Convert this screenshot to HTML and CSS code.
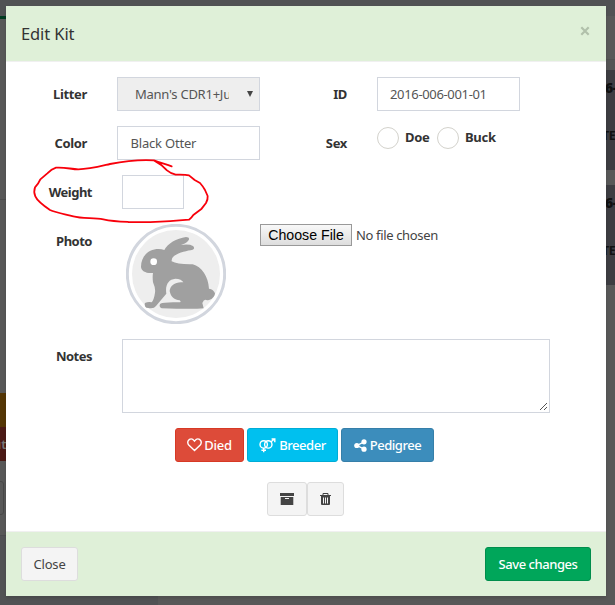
FILE: index.html
```html
<!DOCTYPE html>
<html lang="en">
<head>
<meta charset="utf-8">
<title>Edit Kit</title>
<link rel="stylesheet" href="styles.css">
</head>
<body>
<div class="backdrop" aria-hidden="true">
  <div class="b topbar"></div><div class="b accent"></div><div class="b panel-right"></div>
  <div class="b kit kit-1"><b>6-</b><i>TE</i></div>
  <div class="b kit kit-2"><b>6-</b><i>TE</i></div>
  <div class="b left-line"></div><div class="b orange"></div><div class="b red">ut</div>
  <div class="b ghost-button"></div><div class="b page-bottom"></div>
</div>
<main class="modal">
  <header class="modal-header"><h1>Edit Kit</h1><button class="dismiss" aria-label="Dismiss"><svg width="10" height="10" viewBox="0 0 10 10"><path d="M1.3 1.3 8.7 8.7M8.7 1.3 1.3 8.7"/></svg></button></header>
  <form class="modal-body">
    <div class="row">
      <label class="label">Litter</label><div class="control select"><span class="clip"><span class="litter">Mann's CDR1+Ju</span></span><span class="arrow"></span></div>
      <label class="label second">ID</label><div class="control id">2016-006-001-01</div>
    </div>
    <div class="row">
      <label class="label">Color</label><div class="control color">Black Otter</div>
      <label class="label second">Sex</label><div class="radios"><span class="radio"></span><b class="doe">Doe</b><span class="radio"></span><b class="buck">Buck</b></div>
    </div>
    <div class="row"><label class="label wide">Weight</label><div class="control weight"></div></div>
    <div class="row photo-row">
      <label class="label wide">Photo</label>
      <svg class="avatar" viewBox="318 222 300 300">
        <circle cx="468" cy="372" r="146" fill="#fff" stroke="#d2d6de" stroke-width="9"/><circle cx="468" cy="372" r="132" fill="#eee"/>
        <path fill="#a0a0a0" d="M363 351C363 318 386 297 416 297Q425 297 433 300C442 281 470 265 498 261Q508 261 507 268C505 276 493 282 483 285Q507 281 519 288Q526 295 518 299C503 302 478 306 462 318Q454 323 455 334Q472 344 518 343C545 349 565 380 567 416Q581 418 585 430C584 443 571 453 559 450Q552 447 547 459L551 475Q520 478 425 475Q415 470 421 461Q432 455 480 457Q484 455 479 451C464 450 452 441 449 423C450 405 468 394 490 397Q485 387 466 386C445 388 435 405 439 431Q422 451 408 468Q403 476 390 475L379 473Q372 468 375 459Q384 455 395 457Q402 449 405 428Q407 415 399 397 397 381 399 369C378 371 364 363 363 351Z"/>
        <circle cx="401" cy="335" r="10" fill="#fff"/>
      </svg>
      <div class="file"><button type="button">Choose File</button><span>No file chosen</span></div>
    </div>
    <div class="row notes-row"><label class="label wide">Notes</label><div class="control notes"><svg width="9" height="9" viewBox="0 0 9 9"><path d="M1 8 8 1M5 8 8 5"/></svg></div></div>
    <div class="actions">
      <button type="button" class="btn died"><svg width="15" height="14" viewBox="0 0 15 14"><path d="M7.5 12.5 2 7.2C-.8 4 1.8.9 4.2.9 6 .9 7 2.5 7.5 3.1 8 2.5 9 .9 10.8.9 13.2.9 15.8 4 13 7.2Z"/></svg><span>Died</span></button>
      <button type="button" class="btn breeder"><svg width="17" height="15" viewBox="0 0 17 15"><circle cx="4.7" cy="6.4" r="3.7"/><circle cx="9.3" cy="6.4" r="3.7"/><path d="M4.7 10V14.2M2.4 12.3H7M12 3.8 15.6 1M12.6 1H15.8V4.2"/></svg><span>Breeder</span></button>
      <button type="button" class="btn pedigree"><svg width="13" height="13" viewBox="0 0 13 13"><path d="M10.2 2.8 3 6.5 10.2 10.2"/><circle cx="10" cy="2.8" r="2.6"/><circle cx="2.8" cy="6.5" r="2.6"/><circle cx="10" cy="10.2" r="2.6"/></svg><span>Pedigree</span></button>
    </div>
    <div class="tools">
      <button type="button" class="btn light archive" aria-label="Archive"><svg width="14" height="12" viewBox="0 0 14 12"><path d="M0 0H14V3H0ZM.7 4H13.3V12H.7ZM5 5V6H9V5Z" fill="#444" fill-rule="evenodd"/></svg></button><button type="button" class="btn light trash" aria-label="Delete"><svg width="11" height="12" viewBox="0 0 11 12"><path d="M3 2V.5H8V2M0 2.5H11" fill="none" stroke="#444"/><path d="M1 3H10V11Q10 12 9 12H2Q1 12 1 11ZM3 4.5V10.5H4V4.5ZM5 4.5V10.5H6V4.5ZM7 4.5V10.5H8V4.5Z" fill="#444" fill-rule="evenodd"/></svg></button>
    </div>
  </form>
  <footer class="modal-footer"><button class="btn light close"><span>Close</span></button><button class="btn save"><span>Save changes</span></button></footer>
</main>
<svg class="annotation" width="615" height="605"><path transform="translate(20 150) scale(.33333)" d="M455 49C438 42 420 39 402 31 368 29 315 33 270 42 236 50 207 58 175 58 154 58 136 51 108 53Q95 57 82 70L61 88Q56 100 45 112 40 126 46 139C52 153 74 169 90 180 107 188 137 193 160 199 185 206 218 203 250 208 278 214 303 215 325 216 380 217 438 215 478 211L507 209Q515 203 520 195L545 176 558 159Q564 148 563 138L555 120Q549 109 540 99L524 90 507 76Q495 73 467 74 453 71 441 61 425 43 402 31"/></svg>
</body>
</html>
```
FILE: styles.css
```css
* { box-sizing: border-box; }
body { margin: 0; width: 615px; height: 605px; overflow: hidden; background: #585858; color: #333; font: 13px/20px "Noto Sans", sans-serif; }
button { font: inherit; margin: 0; }
.backdrop { position: absolute; inset: 0; overflow: hidden; }
.b { position: absolute; }
.topbar { left: 0; right: 0; top: 0; height: 16px; background: #515254; }
.accent { left: 0; top: 16px; width: 6px; height: 3px; background: #003b20; }
.panel-right { left: 606px; top: 59px; width: 9px; height: 11px; background: #555; border-top: 1px solid #505050; }
.kit { left: 596px; width: 19px; height: 100px; background: #3d3d42; color: #111; font-weight: 700; }
.kit b, .kit i { display: block; font-style: normal; white-space: nowrap; letter-spacing: -.5px; }
.kit b { margin: 8px 0 0 9px; font-size: 14px; }
.kit i { margin: 28px 0 0 6px; font-size: 12.5px; }
.kit-1 { top: 70px; }
.kit-2 { top: 185px; }
.left-line { left: 0; top: 199px; width: 6px; height: 1px; background: #4d4d4d; }
.orange { left: 0; top: 393px; width: 6px; height: 34px; background: #543605; }
.red { left: 0; top: 427px; width: 12px; height: 34px; background: #4b1a15; color: #777; line-height: 34px; text-indent: -7px; font-weight: 600; }
.ghost-button { left: -30px; top: 481px; width: 34px; height: 34px; border: 1px solid #484848; border-radius: 3px; }
.page-bottom { left: 0; top: 535px; width: 158px; height: 70px; background: #515254; border-top: 1px solid #4b4c4e; }
.modal { position: relative; width: 600px; height: 590px; margin: 6px 0 0 6px; background: #fff; box-shadow: 0 2px 3px rgba(0,0,0,.125); display: flex; flex-direction: column; }
.modal-header { display: flex; justify-content: space-between; height: 56px; padding: 15px; background: #dff0d8; border-bottom: 1px solid #f0f0f0; }
h1 { margin: 0; font-size: 16.5px; font-weight: 400; line-height: 25px; letter-spacing: -.1px; }
.dismiss { width: 12px; height: 20px; padding: 0; border: 0; background: none; line-height: 0; }
.dismiss svg { fill: none; stroke: #b1c0ab; stroke-width: 2.2; }
.modal-body { display: flex; flex-direction: column; height: 469px; padding-top: 15px; }
.row { display: flex; height: 34px; margin-bottom: 15px; }
.label { width: 81px; margin-right: 30px; text-align: right; font-weight: 700; font-size: 13px; line-height: 20px; padding-top: 7px; letter-spacing: -.35px; }
.label.second { width: 87px; }
.label.wide { width: 86px; letter-spacing: -.5px; }
.control { width: 143px; height: 34px; padding: 6px 12px; border: 1px solid #d2d6de; background: #fff; color: #555; white-space: nowrap; }
.select { display: flex; justify-content: space-between; align-items: center; padding: 0 6px 0 17px; background: #eee; }
.clip { width: 94px; overflow: hidden; }
.litter { letter-spacing: -.25px; }
.arrow { border: 3px solid transparent; border-top: 6px solid #444; border-bottom: 0; }
.id { letter-spacing: -.34px; }
.color { padding-left: 12.5px; letter-spacing: -.2px; }
.radios { display: flex; height: 24px; }
.radio { width: 22px; height: 22px; margin-top: 1px; border: 1px solid #d3d2cc; border-radius: 50%; }
.radios b { margin-left: 6px; letter-spacing: -.3px; line-height: 23px; }
.doe { width: 32px; }
.weight { width: 62px; }
.photo-row { height: 100px; }
.avatar { width: 100px; height: 100px; margin-left: 4px; }
.file { display: flex; margin-left: 34px; height: 22px; color: #444; white-space: nowrap; }
.file button { width: 92px; height: 22px; padding: 0; border: 1px solid #999; background: linear-gradient(#f8f8f8,#ddd); color: #000; font: 14.2px/20px "Liberation Sans", sans-serif; margin-right: 4px; }
.file span { line-height: 22px; letter-spacing: -.35px; }
.notes-row { height: 74px; }
.notes { width: 428px; height: 74px; display: flex; align-items: flex-end; justify-content: flex-end; padding: 0 1px 1px 0; }
.notes svg { fill: none; stroke: #555; stroke-width: 1; }
.actions, .tools { display: flex; }
.actions { gap: 3px; padding-left: 169px; }
.tools { padding: 20px 0 0 261px; }
.btn { display: flex; align-items: center; justify-content: center; height: 34px; padding: 0; border: 1px solid; border-radius: 3px; color: #fff; white-space: nowrap; gap: 2px; font-weight: 500; }
.actions svg { fill: none; stroke: #fff; stroke-width: 1.4; }
.actions .pedigree circle { fill: #fff; stroke: none; }
.died { width: 69px; background: #dd4b39; border-color: #d73925; letter-spacing: -.2px; }
.breeder { width: 91px; gap: 3px; background: #00c0ef; border-color: #00acd6; letter-spacing: -.45px; }
.pedigree { width: 93px; gap: 3px; background: #3c8dbc; border-color: #367fa9; letter-spacing: -.45px; }
.light { background: #f4f4f4; border-color: #ddd; color: #444; font-weight: 400; }
.archive { width: 40px; }
.trash { width: 37px; }
.modal-footer { display: flex; justify-content: space-between; height: 65px; padding: 15px; background: #dff0d8; border-top: 1px solid #f0f0f0; }
.close { width: 57px; letter-spacing: -.15px; }
.save { width: 106px; background: #00a65a; border-color: #008d4c; letter-spacing: -.45px; }
.annotation { position: absolute; left: 0; top: 0; fill: none; stroke: #f8000b; stroke-width: 5.4; stroke-linejoin: round; stroke-linecap: round; pointer-events: none; }
```
